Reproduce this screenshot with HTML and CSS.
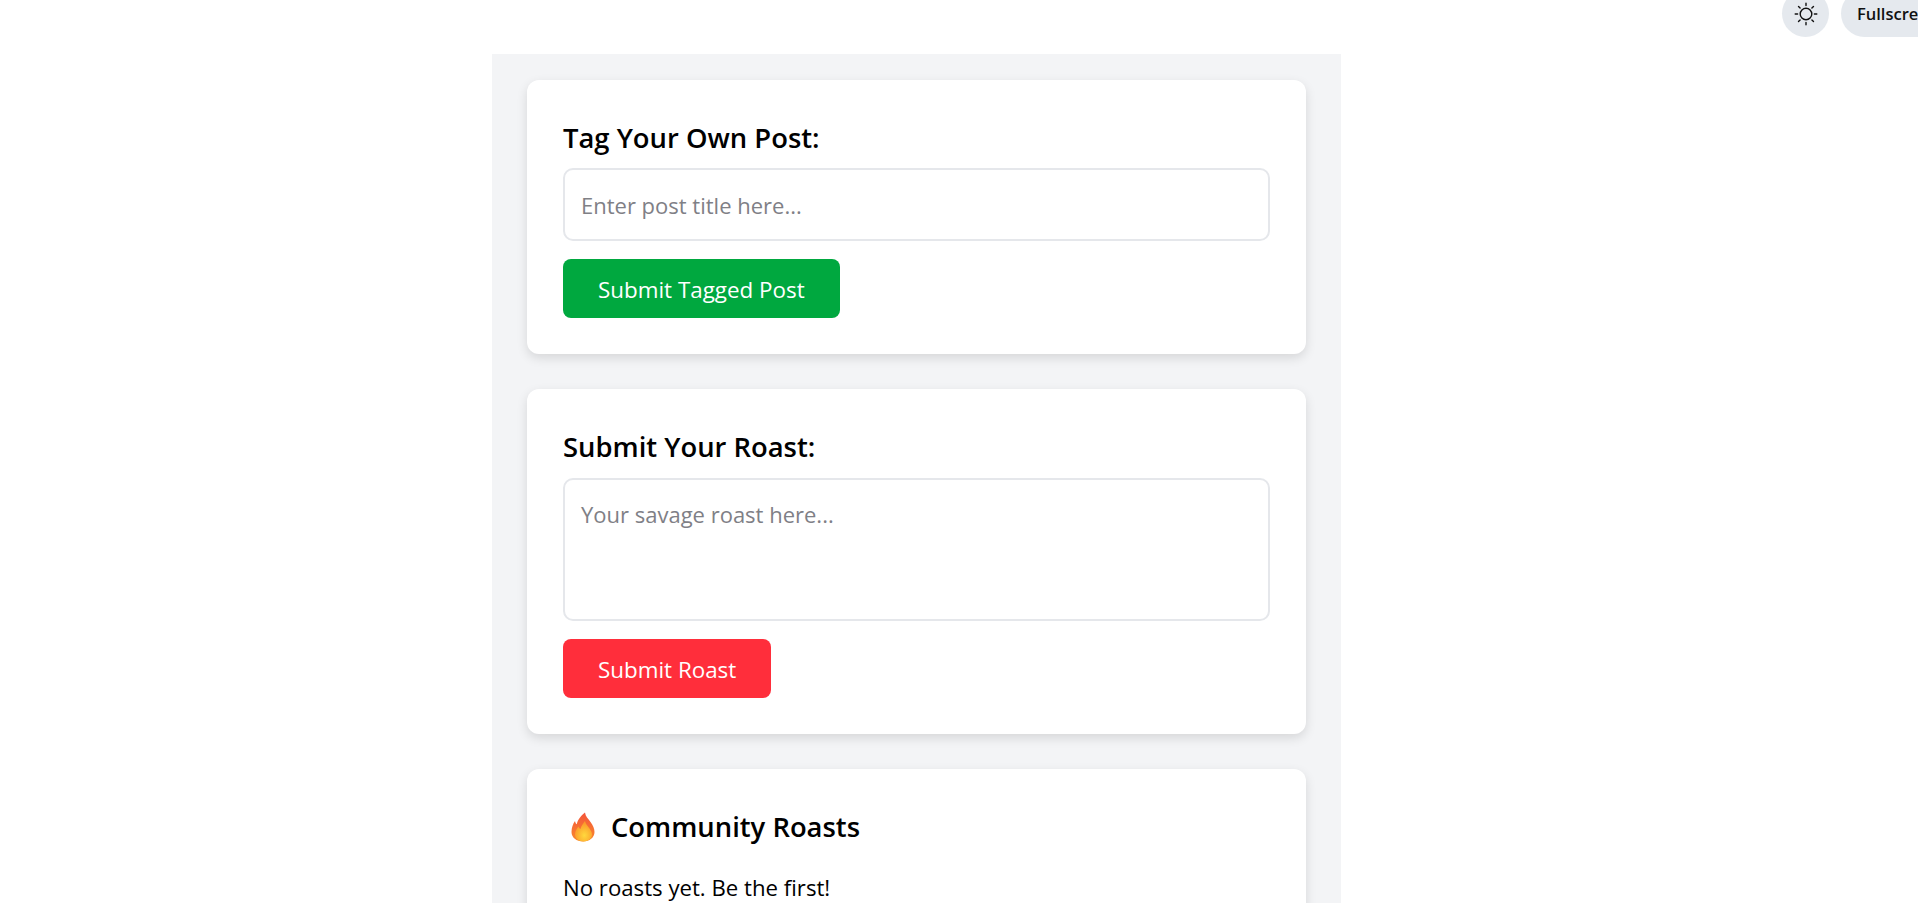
FILE: index.html
```html
<!DOCTYPE html>
<html>
	<head>
		<title>Roast</title>
		<meta charset="utf-8">
		<link rel="stylesheet" href="styles.css">
	</head>
	<body>
		<div class="top-controls">
			<button class="theme-btn" aria-label="Theme">
				<svg width="24" height="24" viewBox="0 0 24 24" fill="none" stroke="#111" stroke-width="1.4" stroke-linecap="round">
					<circle cx="12" cy="12" r="5.8"/>
					<path d="M12 1.200v2.400M12 20.400v2.400M1.200 12h2.400M20.400 12h2.400M4.500 4.500l1.600 1.600M17.900 17.900l1.600 1.600M4.500 19.500l1.600-1.600M17.900 6.100l1.600-1.600"/>
				</svg>
			</button>
			<button class="fullscreen-btn">Fullscreen</button>
		</div>

		<main class="panel">
			<section class="card">
				<h2 class="card-title">Tag Your Own Post:</h2>
				<input class="field" type="text" placeholder="Enter post title here...">
				<button class="btn btn-green">Submit Tagged Post</button>
			</section>

			<section class="card">
				<h2 class="card-title">Submit Your Roast:</h2>
				<textarea class="field field-area" placeholder="Your savage roast here..."></textarea>
				<button class="btn btn-red">Submit Roast</button>
			</section>

			<section class="card">
				<h2 class="card-title roasts-title">
					<svg class="flame" width="24" height="30" viewBox="0 0 24 30">
						<defs>
							<linearGradient id="flameOuter" x1="0" y1="0" x2="0" y2="1">
								<stop offset="0" stop-color="#f4543a"/>
								<stop offset="1" stop-color="#f98a2c"/>
							</linearGradient>
							<radialGradient id="flameInner" cx="0.55" cy="0.7" r="0.6">
								<stop offset="0" stop-color="#ffd83d"/>
								<stop offset="1" stop-color="#fb9a2a"/>
							</radialGradient>
						</defs>
						<path fill="url(#flameOuter)" d="M14 0.500c0.500 4 3 6 5.500 9.500 2.500 3.500 4 6.500 4 10 0 5.500-5 9.500-11.500 9.500S0.500 25.500 0.500 20c0-4.500 1.500-8 3.500-11 0.300 1.500 0.800 2.500 1.800 3.300C6.500 8 10 3.500 14 0.500z"/>
						<path fill="url(#flameInner)" d="M14 9c0.500 3 2.500 4.500 4.500 7.500 1.500 2.300 2.500 4 2.500 6 0 4-4 7-8.500 7-4.500 0-8.500-3-8.500-7 0-3.500 2-6 3.500-8 0.500 1.500 1 2 2 2.500C10 14.500 12 11.500 14 9z"/>
					</svg>
					Community Roasts
				</h2>
				<p class="empty-note">No roasts yet. Be the first!</p>
			</section>
		</main>
	</body>
</html>
```

FILE: styles.css
```css
*
{
	box-sizing: border-box;
}
html, body{
	height: 903px;
	overflow: hidden;
}
body{
	margin: 0;
	padding: 54px 0 0 492px;
	background: #fff;
	color: #000;
	font-family: "Open Sans", "Noto Sans", sans-serif;
}
.top-controls{
	position: absolute;
	top: -10px;
	left: 1782px;
	display: flex;
	gap: 12px;
	white-space: nowrap;
}
.theme-btn{
	width: 47px;
	height: 47px;
	padding: 0;
	border: 0;
	border-radius: 50%;
	background: #e5e9ee;
	display: flex;
	align-items: center;
	justify-content: center;
}
.fullscreen-btn{
	height: 47px;
	padding: 0 16px;
	border: 0;
	border-radius: 24px;
	background: #e5e9ee;
	color: #111;
	font: 600 16.500px "Open Sans", sans-serif;
}
.panel{
	width: 849px;
	padding: 26px 35px 35px;
	background: #f3f4f6;
	display: flex;
	flex-direction: column;
	gap: 35px;
}
.card{
	padding: 35px 36px 36px;
	background: #fff;
	border-radius: 12px;
	box-shadow: 0 4px 11px rgba(0,0,0,0.12);
}
.card-title{
	margin: 0 0 7px;
	font-size: 27.400px;
	line-height: 46px;
	font-weight: 600;
}
.field{
	display: block;
	width: 100%;
	height: 73px;
	padding: 0 16px;
	border: 2px solid #e5e7eb;
	border-radius: 10px;
	background: #fff;
	font: 22px "Open Sans", sans-serif;
	color: #000;
}
.field::placeholder{
	color: #7f8086;
}
.field-area{
	height: 143px;
	margin-top: 8px;
	padding: 19px 16px;
	resize: none;
}
.btn{
	display: block;
	height: 59px;
	margin-top: 18px;
	padding: 2px 35px 0;
	border: 0;
	border-radius: 8px;
	color: #fff;
	font: 22.400px "Open Sans", sans-serif;
}
.btn-green{
	background: #00a83f;
}
.btn-red{
	background: #ff2e3b;
}
.roasts-title{
	display: flex;
	align-items: center;
	gap: 16px;
	padding-left: 8px;
}
.empty-note{
	margin: 23px 0 0;
	font-size: 22.200px;
	line-height: 30px;
}
```
